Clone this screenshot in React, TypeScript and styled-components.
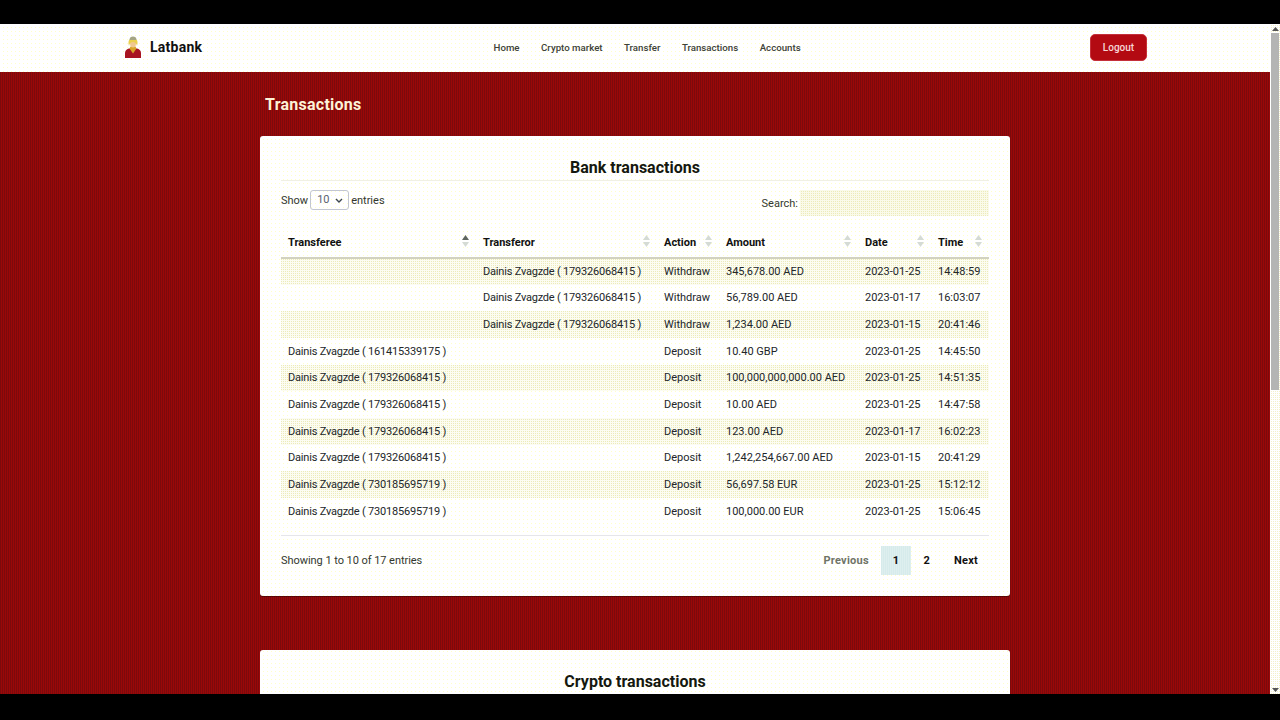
import React from 'react';
import styled, {createGlobalStyle, css} from 'styled-components';

const FONT = `Roboto, "Noto Sans", sans-serif`;

// the reference is a gif, so its flat colours come out as fine dither.
// fixed attachment keeps the dots in phase from one table row to the next
const dots = (dot: string, base: string, size: number) => css`
    background-color: ${dot};
    background-image: linear-gradient(90deg, ${base} ${size - 1}px, transparent ${size - 1}px), linear-gradient(${base} ${size - 1}px, transparent ${size - 1}px);
    background-size: ${size}px ${size}px;
    background-attachment: fixed;
`;

// vertical threads, as the red backdrop has
const weave = (a: string, b: string) => css`
    background-color: ${a};
    background-image: linear-gradient(90deg, ${b} 1px, transparent 1px);
    background-size: 2px 2px;
`;

interface Row {
    transferee: string;
    transferor: string;
    action: string;
    amount: string;
    date: string;
    time: string;
}

const rows: Row[] = [
    {transferee: '', transferor: 'Dainis Zvagzde ( 179326068415 )', action: 'Withdraw', amount: '345,678.00 AED', date: '2023-01-25', time: '14:48:59'},
    {transferee: '', transferor: 'Dainis Zvagzde ( 179326068415 )', action: 'Withdraw', amount: '56,789.00 AED', date: '2023-01-17', time: '16:03:07'},
    {transferee: '', transferor: 'Dainis Zvagzde ( 179326068415 )', action: 'Withdraw', amount: '1,234.00 AED', date: '2023-01-15', time: '20:41:46'},
    {transferee: 'Dainis Zvagzde ( 161415339175 )', transferor: '', action: 'Deposit', amount: '10.40 GBP', date: '2023-01-25', time: '14:45:50'},
    {transferee: 'Dainis Zvagzde ( 179326068415 )', transferor: '', action: 'Deposit', amount: '100,000,000,000.00 AED', date: '2023-01-25', time: '14:51:35'},
    {transferee: 'Dainis Zvagzde ( 179326068415 )', transferor: '', action: 'Deposit', amount: '10.00 AED', date: '2023-01-25', time: '14:47:58'},
    {transferee: 'Dainis Zvagzde ( 179326068415 )', transferor: '', action: 'Deposit', amount: '123.00 AED', date: '2023-01-17', time: '16:02:23'},
    {transferee: 'Dainis Zvagzde ( 179326068415 )', transferor: '', action: 'Deposit', amount: '1,242,254,667.00 AED', date: '2023-01-15', time: '20:41:29'},
    {transferee: 'Dainis Zvagzde ( 730185695719 )', transferor: '', action: 'Deposit', amount: '56,697.58 EUR', date: '2023-01-25', time: '15:12:12'},
    {transferee: 'Dainis Zvagzde ( 730185695719 )', transferor: '', action: 'Deposit', amount: '100,000.00 EUR', date: '2023-01-25', time: '15:06:45'},
];

const columns = [
    {label: 'Transferee', width: 195, sorted: true},
    {label: 'Transferor', width: 181},
    {label: 'Action', width: 62},
    {label: 'Amount', width: 139},
    {label: 'Date', width: 73},
    {label: 'Time', width: 58},
];

const navLinks = ['Home', 'Crypto market', 'Transfer', 'Transactions', 'Accounts'];

function LogoMark() {
    return (
        <svg width="19" height="23" viewBox="0 0 19 23">
            <path d="M1 22v-5c0-2.500 2-4 4-4.500h8c2 .5 4 2 4 4.500v5z" fill="#a81420"/>
            <path d="M5.500 12.500l3.500 5 3.500-5-1-2h-5z" fill="#d8a428"/>
            <ellipse cx="9" cy="7.500" rx="3" ry="4" fill="#f0c890"/>
            <path d="M5 10C4 7 4.500 4.500 5.500 3.500h7c1 1 1.500 3.500 .5 6.500-.5-2.500-2-4-4-4s-3.500 1.500-4 4z" fill="#ead04e"/>
            <path d="M5.500 4C5.500 1.500 7 .5 9 .5s3.500 1 3.500 3.500z" fill="#a5a583"/>
        </svg>
    );
}

function SortIcon({active}: {active?: boolean}) {
    return (
        <SortMark viewBox="0 0 7 12" width="7" height="12">
            <path d="M3.500 0L7 5H0z" fill={active ? '#5f665f' : '#d5dbd5'}/>
            <path d="M3.500 12L0 7h7z" fill="#d5dbd5"/>
        </SortMark>
    );
}

export default function App() {
    return (
        <Stage>
            <GlobalStyle/>
            <Letterbox $height={24}/>
            <Viewport>
                <Page>
                    <NavBar>
                        <Brand>
                            <LogoMark/>
                            <BrandName>Latbank</BrandName>
                        </Brand>
                        <NavLinks>
                            {navLinks.map(link => <NavLink key={link}>{link}</NavLink>)}
                        </NavLinks>
                        <LogoutButton>Logout</LogoutButton>
                    </NavBar>
                    <Content>
                        <PageTitle>Transactions</PageTitle>
                        <Card>
                            <CardTitle>Bank transactions</CardTitle>
                            <Controls>
                                <ShowLabel>
                                    Show
                                    <EntriesBox>
                                        10
                                        <svg width="8" height="5" viewBox="0 0 8 5">
                                            <path d="M1 1l3 3 3-3" fill="none" stroke="#3c4650" strokeWidth="1.4"/>
                                        </svg>
                                    </EntriesBox>
                                    entries
                                </ShowLabel>
                                <SearchLabel>
                                    Search:
                                    <SearchBox/>
                                </SearchLabel>
                            </Controls>
                            <Table>
                                <colgroup>
                                    {columns.map(col => <col key={col.label} width={col.width}/>)}
                                </colgroup>
                                <thead>
                                    <tr>
                                        {columns.map(col => (
                                            <HeadCell key={col.label}>
                                                {col.label}
                                                <SortIcon active={col.sorted}/>
                                            </HeadCell>
                                        ))}
                                    </tr>
                                </thead>
                                <tbody>
                                    {rows.map((row, i) => (
                                        <BodyRow key={i} $striped={i % 2 === 0} $short={i % 3 === 1}>
                                            <AccountCell>{row.transferee}</AccountCell>
                                            <AccountCell>{row.transferor}</AccountCell>
                                            <Cell>{row.action}</Cell>
                                            <Cell>{row.amount}</Cell>
                                            <Cell>{row.date}</Cell>
                                            <Cell>{row.time}</Cell>
                                        </BodyRow>
                                    ))}
                                </tbody>
                            </Table>
                            <Footer>
                                <Info>Showing 1 to 10 of 17 entries</Info>
                                <Pagination>
                                    <PageButton $disabled>Previous</PageButton>
                                    <PageButton $current>1</PageButton>
                                    <PageButton>2</PageButton>
                                    <PageButton>Next</PageButton>
                                </Pagination>
                            </Footer>
                        </Card>
                        <SecondCard>
                            <CardTitle>Crypto transactions</CardTitle>
                        </SecondCard>
                    </Content>
                </Page>
                <Scrollbar>
                    <ScrollArrow>
                        <svg width="7" height="4" viewBox="0 0 7 4"><path d="M3.500 0L7 4H0z" fill="#555"/></svg>
                    </ScrollArrow>
                    <ScrollThumb/>
                    <ScrollArrow>
                        <svg width="7" height="4" viewBox="0 0 7 4"><path d="M3.500 4L0 0h7z" fill="#555"/></svg>
                    </ScrollArrow>
                </Scrollbar>
            </Viewport>
            <Letterbox $height={26}/>
        </Stage>
    );
}

const GlobalStyle = createGlobalStyle`
    html, body {
        margin: 0;
        padding: 0;
        height: 100%;
        overflow: hidden;
        background: #000;
    }
`;

const Stage = styled.div`
    display: flex;
    flex-direction: column;
    width: 1280px;
    height: 720px;
    font-family: ${FONT};
    color: #22262a;
`;

const Letterbox = styled.div<{$height: number}>`
    flex: 0 0 ${p => p.$height}px;
    background: #000;
`;

const Viewport = styled.div`
    flex: 1;
    min-height: 0;
    display: flex;
`;

const Page = styled.div`
    flex: 1;
    min-width: 0;
    overflow: hidden;
    ${weave('#9a0808', '#7c0a0c')}
`;

const NavBar = styled.nav`
    height: 48px;
    box-sizing: border-box;
    padding: 0 123px 2px 124px;
    display: flex;
    align-items: center;
    justify-content: space-between;
    ${dots('#ffffc8', '#ffffff', 4)}
`;

const Brand = styled.div`
    display: flex;
    align-items: center;
    gap: 7px;
`;

const BrandName = styled.span`
    font-size: 14px;
    font-weight: 700;
    letter-spacing: 0.25px;
    color: #111;
`;

const NavLinks = styled.div`
    display: flex;
    gap: 21.5px;
    margin-left: 2px;
`;

const NavLink = styled.a`
    font-size: 9.7px;
    font-weight: 500;
    color: #3d4238;
`;

const LogoutButton = styled.button`
    width: 57px;
    height: 27px;
    padding: 0;
    border: 1px solid #c4303a;
    border-radius: 5px;
    background: #b30a12;
    color: #f7d6d6;
    font-family: ${FONT};
    font-size: 10px;
    font-weight: 500;
`;

const Content = styled.main`
    width: 750px;
    margin: 0 auto;
`;

const PageTitle = styled.h1`
    margin: 0;
    padding: 22px 0 21px 5px;
    font-size: 16px;
    line-height: 21px;
    font-weight: 700;
    letter-spacing: 0.25px;
    color: #fdf3d8;
`;

const Card = styled.section`
    box-sizing: border-box;
    height: 460px;
    padding: 21px 21px 0;
    border-radius: 3px;
    box-shadow: 0 1px 0 rgba(0, 0, 0, 0.35);
    ${dots('#ffffc8', '#ffffff', 4)}
`;

const SecondCard = styled(Card)`
    margin-top: 54px;
`;

const CardTitle = styled.h2`
    margin: 0;
    height: 23px;
    font-size: 16px;
    line-height: 21px;
    font-weight: 700;
    text-align: center;
    color: #15180f;
    border-bottom: 1px solid #f0f0e4;
`;

const Controls = styled.div`
    display: flex;
    justify-content: space-between;
    align-items: flex-start;
    height: 46px;
    padding-top: 9px;
    box-sizing: border-box;
    font-size: 11px;
`;

const ShowLabel = styled.label`
    display: flex;
    align-items: flex-start;
    gap: 2px;
    height: 20px;
    line-height: 22px;
    color: #33382f;
`;

const EntriesBox = styled.span`
    box-sizing: border-box;
    width: 39px;
    height: 20px;
    padding: 0 5px 0 6px;
    display: flex;
    align-items: center;
    justify-content: space-between;
    border: 1px solid #c2c6d2;
    border-radius: 3px;
    color: #5a6272;
`;

const SearchLabel = styled.label`
    display: flex;
    align-items: flex-start;
    gap: 2px;
    height: 26px;
    line-height: 28px;
    color: #33382f;
`;

const SearchBox = styled.span`
    display: block;
    width: 189px;
    height: 26px;
    ${dots('#ecebb8', '#fafaea', 2)}
`;

const Table = styled.table`
    width: 708px;
    table-layout: fixed;
    border-collapse: collapse;
    font-size: 11px;
`;

const HeadCell = styled.th`
    position: relative;
    height: 30px;
    padding: 0 7px;
    text-align: left;
    font-weight: 700;
    color: #111;
    border-bottom: 2px solid #d2d2c0;
`;

const SortMark = styled.svg`
    position: absolute;
    top: 8px;
    right: 7px;
`;

const BodyRow = styled.tr<{$striped: boolean; $short: boolean}>`
    height: ${p => (p.$short ? 26 : 27)}px;
    ${p => p.$striped && dots('#ecebb8', '#fcfcf2', 2)}
`;

const Cell = styled.td`
    padding: 0 7px 1px;
    white-space: nowrap;
    color: #22262a;
`;

const AccountCell = styled(Cell)`
    letter-spacing: -0.2px;
`;

const Footer = styled.div`
    display: flex;
    justify-content: space-between;
    align-items: center;
    margin-top: 10px;
    height: 48px;
    border-top: 1px solid #e6e6ea;
`;

const Info = styled.div`
    font-size: 11px;
    letter-spacing: -0.05px;
    color: #33382f;
`;

const Pagination = styled.div`
    display: flex;
    align-items: center;
    margin-right: -1px;
`;

const PageButton = styled.a<{$disabled?: boolean; $current?: boolean}>`
    box-sizing: border-box;
    height: 29px;
    padding: 0 12px;
    display: flex;
    align-items: center;
    font-size: 11px;
    font-weight: 700;
    letter-spacing: 0.25px;
    color: ${p => (p.$disabled ? '#6f7468' : '#111')};
    ${p => p.$current && dots('#c8e4e4', '#e0f0f0', 2)}
`;

const Scrollbar = styled.div`
    flex: 0 0 10px;
    display: flex;
    flex-direction: column;
    ${dots('#f4f0c8', '#ffffff', 2)}
`;

const ScrollArrow = styled.div`
    flex: 0 0 9px;
    display: flex;
    align-items: center;
    justify-content: center;
`;

const ScrollThumb = styled.div`
    height: 357px;
    margin: 0 1px auto;
    background: #b4b4b4;
`;
